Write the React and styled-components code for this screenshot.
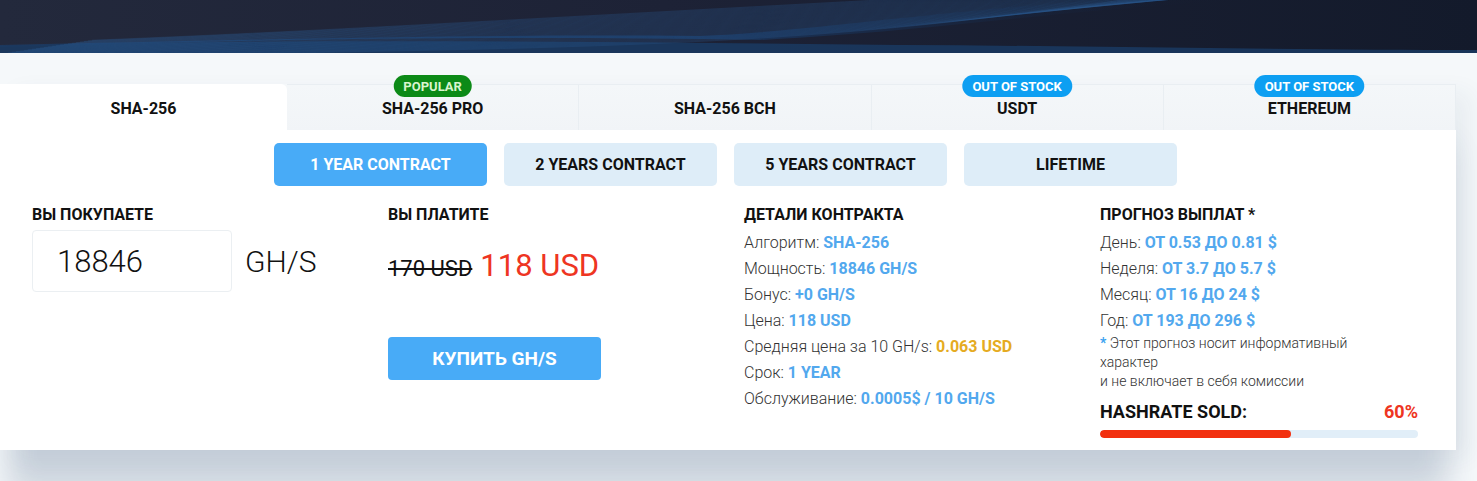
import styled, { createGlobalStyle } from 'styled-components';

const GlobalStyle = createGlobalStyle`
  body {
    margin: 0;
    background: #f5f8fa;
    font-family: Roboto, "Noto Sans", sans-serif;
    color: #111;
  }
  * { box-sizing: border-box; }
`;

const Banner = styled.div`
  height: 53px;
  background: linear-gradient(90deg, #23293c 0%, #1d2236 45%, #131a2b 100%);
  overflow: hidden;
  svg { display: block; }
`;

const Page = styled.main`
  padding: 31px 0;
`;

const Section = styled.section`
  position: relative;
  width: 1456px;
  box-shadow: 0 52px 30px -8px rgba(40, 70, 110, 0.2), 14px 8px 22px rgba(40, 70, 110, 0.06);
`;

const Tabs = styled.div`
  display: grid;
  grid-template-columns: 287px repeat(4, 1fr);
  height: 46px;
`;

const Tab = styled.div`
  position: relative;
  display: flex;
  align-items: center;
  justify-content: center;
  padding-top: 2px;
  font-size: 16px;
  font-weight: 700;
  color: #111;
  background: ${p => (p.$active ? '#fff' : 'linear-gradient(180deg, #f4f7f9, #f1f4f7)')};
  border-top: ${p => (p.$active ? 'none' : '1px solid #e9eef2')};
  border-right: ${p => (p.$active ? 'none' : '1px solid #e9eef2')};
  border-top-right-radius: ${p => (p.$active ? '6px' : '0')};
  cursor: pointer;
`;

const Badge = styled.span`
  position: absolute;
  top: -10px;
  left: 50%;
  transform: translateX(-50%);
  height: 22px;
  padding: 0 10px;
  border-radius: 11px;
  display: flex;
  align-items: center;
  font-size: 13px;
  font-weight: 700;
  white-space: nowrap;
  color: ${p => (p.$tone === 'green' ? '#d9f5cf' : '#fff')};
  background: ${p => (p.$tone === 'green' ? '#0c8a17' : '#0d9ff2')};
`;

const Body = styled.div`
  background: #fff;
  padding: 13px 0 12px 32px;
`;

const Periods = styled.div`
  display: flex;
  justify-content: center;
  gap: 17px;
  padding-right: 37px;
  margin-bottom: 18px;
`;

const Period = styled.button`
  width: 213px;
  height: 43px;
  border: none;
  border-radius: 5px;
  font-family: inherit;
  font-size: 16px;
  font-weight: 700;
  color: ${p => (p.$active ? '#fff' : '#111')};
  background: ${p => (p.$active ? '#48abf7' : '#deedf8')};
  cursor: pointer;
`;

const Columns = styled.div`
  display: grid;
  grid-template-columns: repeat(4, 356px);
`;

const Col = styled.div`
  padding-right: 37px;
`;

const Heading = styled.h3`
  margin: 0 0 4px;
  font-size: 16px;
  line-height: 22px;
  font-weight: 700;
  color: #111;
`;

const AmountRow = styled.div`
  display: flex;
  align-items: center;
  gap: 13px;
`;

const AmountBox = styled.div`
  width: 200px;
  height: 62px;
  border: 1px solid #ebeff2;
  border-radius: 4px;
  padding-left: 24px;
  display: flex;
  align-items: center;
  font-size: 31px;
  font-weight: 300;
  color: #111;
`;

const Unit = styled.span`
  font-size: 30px;
  font-weight: 300;
  color: #111;
`;

const Price = styled.div`
  display: flex;
  align-items: baseline;
  gap: 8px;
  margin-top: 22px;
  line-height: 36px;
`;

const OldPrice = styled.s`
  font-size: 22px;
  color: #111;
  text-decoration-thickness: 2px;
`;

const NewPrice = styled.span`
  font-size: 31px;
  color: #ee3522;
`;

const BuyButton = styled.button`
  margin-top: 50px;
  width: 213px;
  height: 43px;
  border: none;
  border-radius: 4px;
  background: #48abf7;
  color: #fff;
  font-family: inherit;
  font-size: 19px;
  font-weight: 700;
  cursor: pointer;
`;

const Line = styled.div`
  font-size: 16px;
  line-height: 26px;
  font-weight: 300;
  color: #333;
  white-space: nowrap;
`;

const Value = styled.b`
  font-weight: 700;
  color: ${p => (p.$tone === 'gold' ? '#e5ab22' : '#52a8ee')};
`;

const Note = styled.p`
  margin: 0;
  width: 290px;
  font-size: 14px;
  line-height: 19px;
  font-weight: 300;
  color: #333;
`;

const Star = styled.span`
  color: #3aa2f0;
  font-weight: 700;
`;

const SoldRow = styled.div`
  display: flex;
  justify-content: space-between;
  margin-top: 10px;
  width: 318px;
  font-size: 18px;
  line-height: 22px;
  font-weight: 700;
`;

const SoldPercent = styled.span`
  color: #ee3522;
`;

const Track = styled.div`
  margin-top: 7px;
  width: 318px;
  height: 8px;
  border-radius: 4px;
  background: #e1eef8;
  overflow: hidden;
`;

const Fill = styled.div`
  height: 100%;
  border-radius: 4px;
  background: #f2300f;
`;

const tabs = [
  { name: 'SHA-256', active: true },
  { name: 'SHA-256 PRO', badge: 'POPULAR', tone: 'green' },
  { name: 'SHA-256 BCH' },
  { name: 'USDT', badge: 'OUT OF STOCK', tone: 'blue' },
  { name: 'ETHEREUM', badge: 'OUT OF STOCK', tone: 'blue' },
];

const periods = ['1 YEAR CONTRACT', '2 YEARS CONTRACT', '5 YEARS CONTRACT', 'LIFETIME'];

const details = [
  ['Алгоритм:', 'SHA-256'],
  ['Мощность:', '18846 GH/S'],
  ['Бонус:', '+0 GH/S'],
  ['Цена:', '118 USD'],
  ['Средняя цена за 10 GH/s:', '0.063 USD', 'gold'],
  ['Срок:', '1 YEAR'],
  ['Обслуживание:', '0.0005$ / 10 GH/S'],
];

const forecast = [
  ['День:', 'ОТ 0.53 ДО 0.81 $'],
  ['Неделя:', 'ОТ 3.7 ДО 5.7 $'],
  ['Месяц:', 'ОТ 16 ДО 24 $'],
  ['Год:', 'ОТ 193 ДО 296 $'],
];

const sold = 60;

const BannerArt = () => {
  const lines = [];
  for (let i = 0; i < 34; i++) {
    const y0 = 60 - i * 0.6;
    const y1 = 46 - i * 1.4;
    lines.push(
      <path
        key={i}
        d={`M ${-40 + i * 4} ${y0} C 400 ${y0 - 12}, 700 ${y1 + 8}, ${1000 + i * 14} ${y1 - 30} S 1400 ${-40}, ${1500 + i * 6} -60`}
        stroke="#2b5c93"
        strokeOpacity={0.35}
        strokeWidth="0.8"
        fill="none"
      />
    );
  }
  return (
    <svg width="100%" height="53" viewBox="0 0 1477 53" preserveAspectRatio="none">
      <defs>
        <linearGradient id="wave" x1="0" x2="1" y1="0" y2="0">
          <stop offset="0" stopColor="#1c3b64" />
          <stop offset="0.55" stopColor="#1a3d6b" />
          <stop offset="1" stopColor="#141b2e" stopOpacity="0" />
        </linearGradient>
      </defs>
      <path d="M0 47 C 300 38, 520 36, 760 40 C 950 30, 1050 10, 1250 0 L 1100 0 C 900 15, 800 32, 700 36 C 450 34, 250 40, 0 45 Z" fill="url(#wave)" opacity="0.8" />
      <path d="M0 53 L0 46 C 300 38, 600 42, 900 45 C 1100 46, 1300 50, 1477 50 L1477 53 Z" fill="#1a3a62" opacity="0.85" />
      {lines}
    </svg>
  );
};

const App = () => (
  <>
    <GlobalStyle />
    <Banner>
      <BannerArt />
    </Banner>
    <Page>
      <Section>
        <Tabs>
          {tabs.map(t => (
            <Tab key={t.name} $active={t.active}>
              {t.badge && <Badge $tone={t.tone}>{t.badge}</Badge>}
              {t.name}
            </Tab>
          ))}
        </Tabs>
        <Body>
          <Periods>
            {periods.map((p, i) => (
              <Period key={p} $active={i === 0}>
                {p}
              </Period>
            ))}
          </Periods>
          <Columns>
            <Col>
              <Heading>ВЫ ПОКУПАЕТЕ</Heading>
              <AmountRow>
                <AmountBox>18846</AmountBox>
                <Unit>GH/S</Unit>
              </AmountRow>
            </Col>
            <Col>
              <Heading>ВЫ ПЛАТИТЕ</Heading>
              <Price>
                <OldPrice>170 USD</OldPrice>
                <NewPrice>118 USD</NewPrice>
              </Price>
              <BuyButton>КУПИТЬ GH/S</BuyButton>
            </Col>
            <Col>
              <Heading>ДЕТАЛИ КОНТРАКТА</Heading>
              {details.map(([label, value, tone]) => (
                <Line key={label}>
                  {label} <Value $tone={tone}>{value}</Value>
                </Line>
              ))}
            </Col>
            <Col>
              <Heading>ПРОГНОЗ ВЫПЛАТ *</Heading>
              {forecast.map(([label, value]) => (
                <Line key={label}>
                  {label} <Value>{value}</Value>
                </Line>
              ))}
              <Note>
                <Star>*</Star> Этот прогноз носит информативный характер
                <br />и не включает в себя комиссии
              </Note>
              <SoldRow>
                <span>HASHRATE SOLD:</span>
                <SoldPercent>{sold}%</SoldPercent>
              </SoldRow>
              <Track>
                <Fill style={{ width: `${sold}%` }} />
              </Track>
            </Col>
          </Columns>
        </Body>
      </Section>
    </Page>
  </>
);

export default App;
